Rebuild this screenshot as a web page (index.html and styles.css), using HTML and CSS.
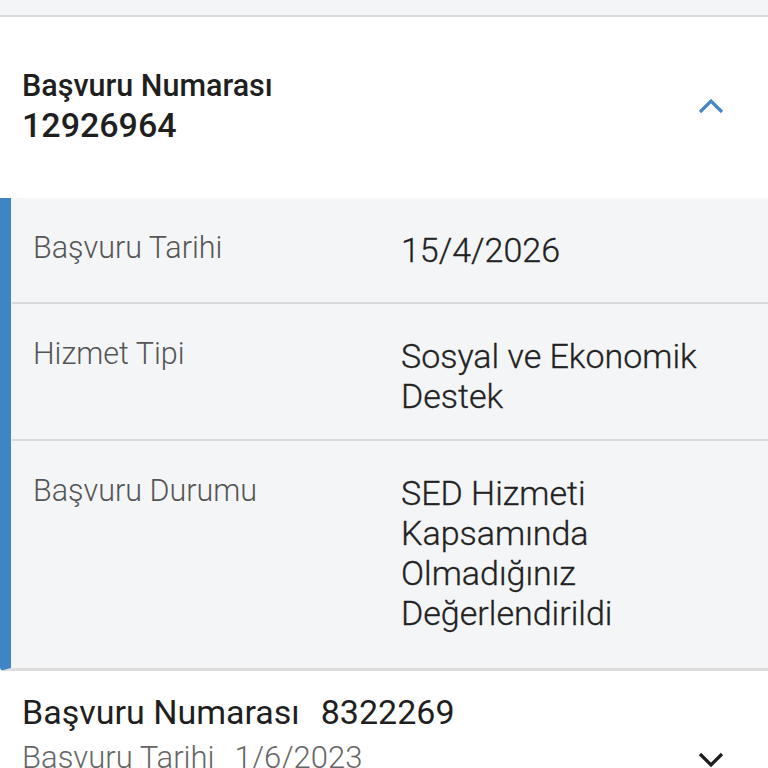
FILE: index.html
```html
<!DOCTYPE html>
<html lang="tr">
<head>
<meta charset="utf-8">
<link rel="stylesheet" href="styles.css">
</head>
<body>
<div class="topbar"></div>
<section class="card-head">
  <div class="title">
    <div>Başvuru Numarası</div>
    <div class="title-num">12926964</div>
  </div>
  <svg class="chev-up" width="28" height="18" viewBox="0 0 28 18"><path d="M3 15 L14 4 L25 15" fill="none" stroke="#4a86c5" stroke-width="3.2"/></svg>
</section>
<section class="detail">
  <div class="row row-date">
    <div class="label">Başvuru Tarihi</div>
    <div class="value">15/4/2026</div>
  </div>
  <div class="row row-type">
    <div class="label">Hizmet Tipi</div>
    <div class="value">Sosyal ve Ekonomik<br>Destek</div>
  </div>
  <div class="row row-status">
    <div class="label">Başvuru Durumu</div>
    <div class="value">SED Hizmeti<br>Kapsamında<br>Olmadığınız<br>Değerlendirildi</div>
  </div>
</section>
<section class="card-closed">
  <div class="closed-text">
    <div class="closed-title"><span>Başvuru Numarası</span><span>8322269</span></div>
    <div class="closed-sub"><span>Başvuru Tarihi</span><span>1/6/2023</span></div>
  </div>
  <svg class="chev-down" width="28" height="18" viewBox="0 0 28 18"><path d="M3 3 L14 14 L25 3" fill="none" stroke="#1e1e1e" stroke-width="3.2"/></svg>
</section>
</body>
</html>
```
FILE: styles.css
```css
html, body {
  margin: 0;
  padding: 0;
  background: #ffffff;
  font-family: Roboto, "Noto Sans", sans-serif;
  color: #212121;
  overflow: hidden;
  height: 768px;
}
.topbar {
  height: 15px;
  background: #f4f5f7;
  border-bottom: 2px solid #d9d9d9;
}
.card-head {
  height: 181px;
  display: flex;
  align-items: center;
  justify-content: space-between;
  padding: 0 43px 0 22px;
  box-sizing: border-box;
}
.title {
  font-weight: 500;
  font-size: 30.5px;
  line-height: 38px;
  color: #1f1f1f;
  margin-top: -4px;
}
.title-num {
  font-size: 34px;
  line-height: 40px;
}
.chev-up {
  display: block;
  margin-top: -4px;
}
.detail {
  background: #f4f5f7;
  border-left: 11px solid #3f84c4;
  border-bottom: 3px solid #dcdcdc;
  border-bottom-left-radius: 4px;
}
.row {
  display: grid;
  grid-template-columns: 368px 1fr;
  padding: 32px 0 23px 21px;
  border-bottom: 2px solid #d9d9d9;
  margin-left: 1px;
}
.row-date {
  padding-bottom: 32px;
}
.row-status {
  border-bottom: none;
  padding-bottom: 35px;
}
.label {
  font-weight: 300;
  font-size: 30.5px;
  line-height: 40px;
  color: #555555;
  margin-top: -2px;
}
.value {
  font-weight: 300;
  font-size: 34px;
  line-height: 40px;
  color: #222222;
  -webkit-text-stroke: 0.3px #222222;
}
.card-closed {
  display: flex;
  justify-content: space-between;
  padding: 21px 43px 0 22px;
}
.closed-title {
  font-size: 34px;
  line-height: 40px;
  color: #1f1f1f;
  display: flex;
  gap: 21px;
}
.closed-sub {
  font-size: 31px;
  line-height: 40px;
  color: #666666;
  font-weight: 300;
  display: flex;
  gap: 20px;
  margin-top: 6px;
}
.chev-down {
  display: block;
  align-self: flex-end;
  margin-bottom: 9px;
}
```
